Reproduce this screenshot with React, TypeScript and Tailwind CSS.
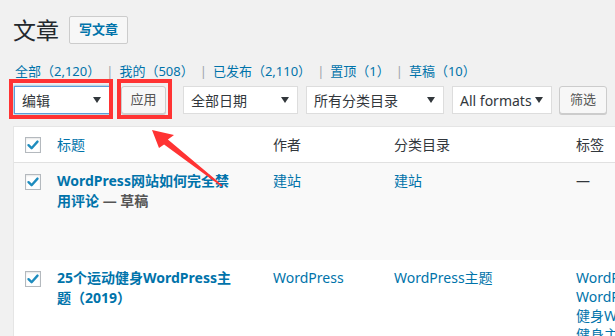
import React from "react";

const FONT = { fontFamily: '"Noto Sans", "Noto Sans CJK SC", sans-serif' };

function Caret() {
  return (
    <svg width="8" height="6" viewBox="0 0 8 6" className="shrink-0">
      <path d="M0 0 L8 0 L4 6 Z" fill="#32373c" />
    </svg>
  );
}

function Select({ label, w, focus }: { label: string; w: string; focus?: boolean }) {
  return (
    <div
      className={`${w} h-[28px] flex items-center justify-between bg-white pl-[7px] pr-[8px] text-[14px] text-[#32373c] border ${
        focus ? "border-[#5b9dd9] shadow-[0_0_2px_rgba(30,140,190,0.8)]" : "border-[#ddd]"
      }`}
    >
      <span className="whitespace-nowrap">{label}</span>
      <Caret />
    </div>
  );
}

function Btn({ label, w }: { label: string; w: string }) {
  return (
    <div
      className={`${w} h-[28px] flex items-center justify-center bg-[#f7f7f7] border border-[#ccc] rounded-[3px] shadow-[0_1px_0_#ccc] text-[13px] text-[#555]`}
    >
      {label}
    </div>
  );
}

function Check() {
  return (
    <div className="w-[16px] h-[16px] border border-[#b4b9be] bg-white shadow-[inset_0_1px_2px_rgba(0,0,0,0.1)] flex items-center justify-center">
      <svg width="14" height="14" viewBox="0 0 14 14">
        <path d="M2.5 7.2 L5.6 10.2 L11.5 3.6" fill="none" stroke="#1e8cbe" strokeWidth="2.4" strokeLinecap="round" strokeLinejoin="round" />
      </svg>
    </div>
  );
}

function Sep() {
  return <span className="text-[#a0a5aa] mx-[6px]">|</span>;
}

export default function App() {
  return (
    <div className="relative w-[615px] h-[336px] overflow-hidden bg-[#f1f1f1]" style={FONT}>
      <div className="pl-[13px] pt-[16px]">
        <div className="flex items-center h-[28px]">
          <span className="text-[23px] text-[#23282d] leading-[28px]">文章</span>
          <div className="ml-[10px] h-[28px] w-[59px] flex items-center justify-center border border-[#ccc] bg-[#f7f7f7] rounded-[2px] text-[13px] font-bold text-[#0073aa]">
            写文章
          </div>
        </div>

        <div className="mt-[18px] h-[18px] leading-[18px] pl-[2px] text-[13px] text-[#0073aa] whitespace-nowrap flex">
          <span>全部（2,120）</span>
          <Sep />
          <span>我的（508）</span>
          <Sep />
          <span>已发布（2,110）</span>
          <Sep />
          <span>置顶（1）</span>
          <Sep />
          <span>草稿（10）</span>
        </div>

        <div className="mt-[6px] flex items-center pl-[1px]">
          <Select label="编辑" w="w-[96px]" focus />
          <div className="ml-[11px]">
            <Btn label="应用" w="w-[45px]" />
          </div>
          <div className="ml-[17px]">
            <Select label="全部日期" w="w-[115px]" />
          </div>
          <div className="ml-[8px]">
            <Select label="所有分类目录" w="w-[138px]" />
          </div>
          <div className="ml-[8px]">
            <Select label="All formats" w="w-[100px]" />
          </div>
          <div className="ml-[7px]">
            <Btn label="筛选" w="w-[48px]" />
          </div>
        </div>

        <div className="mt-[12px] w-[660px] border border-[#e5e5e5] bg-white text-[14px]">
          <div className="flex h-[36px] items-center border-b border-[#e1e1e1] text-[#32373c]">
            <div className="w-[33px] shrink-0 pl-[11px]">
              <Check />
            </div>
            <div className="w-[216px] shrink-0 px-[10px] text-[#0073aa]">标题</div>
            <div className="w-[121px] shrink-0 pl-[10px]">作者</div>
            <div className="w-[182px] shrink-0 pl-[10px]">分类目录</div>
            <div className="pl-[10px]">标签</div>
          </div>

          <div className="flex h-[97px] bg-[#f9f9f9] pt-[8px] leading-[20px]">
            <div className="w-[33px] shrink-0 pl-[11px] pt-[3px]">
              <Check />
            </div>
            <div className="w-[216px] shrink-0 pl-[10px] pr-[26px] font-bold text-[#0073aa] text-[14px]">
              WordPress网站如何完全禁用评论 <span className="text-[#555]">— 草稿</span>
            </div>
            <div className="w-[121px] shrink-0 pl-[10px] text-[#0073aa]">建站</div>
            <div className="w-[182px] shrink-0 pl-[10px] text-[#0073aa]">建站</div>
            <div className="pl-[10px] text-[#32373c]">—</div>
          </div>

          <div className="flex h-[120px] bg-white pt-[8px] leading-[19px]">
            <div className="w-[33px] shrink-0 pl-[11px] pt-[3px]">
              <Check />
            </div>
            <div className="w-[216px] shrink-0 pl-[10px] pr-[26px] font-bold text-[#0073aa] text-[14px] leading-[20px]">
              25个运动健身WordPress主题（2019）
            </div>
            <div className="w-[121px] shrink-0 pl-[10px] text-[#0073aa]">WordPress</div>
            <div className="w-[182px] shrink-0 pl-[10px] text-[#0073aa]">WordPress主题</div>
            <div className="pl-[10px] text-[#0073aa] whitespace-nowrap">
              <div>WordPress主题,</div>
              <div>WordPress健身主题,</div>
              <div>健身WordPress主题,</div>
              <div>健身主题</div>
            </div>
          </div>
        </div>
      </div>

      {/* annotations */}
      <div className="absolute left-[9px] top-[79px] w-[104px] h-[40px] border-4 border-[#f33]" />
      <div className="absolute left-[117px] top-[79px] w-[55px] h-[40px] border-4 border-[#f33]" />
      <svg className="absolute left-0 top-0" width="615" height="336" viewBox="0 0 615 336">
        <polygon
          points="152,130 174,135 167.9,139.6 222.6,185.4 221.4,186.6 164.1,144.4 159,148"
          fill="#f33"
        />
      </svg>
    </div>
  );
}
